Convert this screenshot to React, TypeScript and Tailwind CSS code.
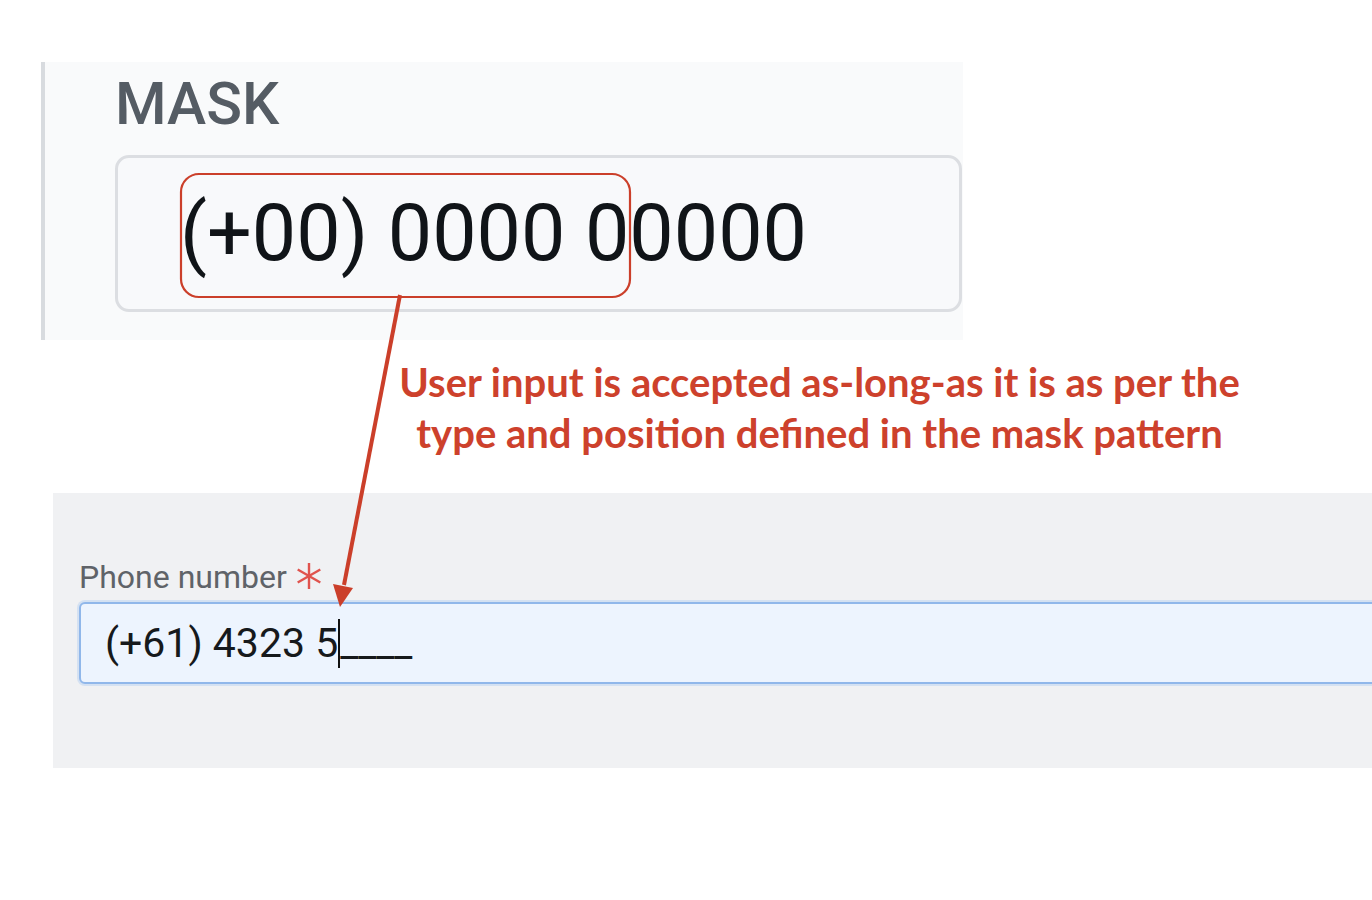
import React from 'react';

const Asterisk = () => (
  <svg width="28" height="28" viewBox="0 0 28 28" className="ml-[8px] -mt-[2px]">
    <g stroke="#e0534d" strokeWidth="2.4" strokeLinecap="butt">
      <line x1="14" y1="1" x2="14" y2="27" />
      <line x1="2.7" y1="7.5" x2="25.3" y2="20.5" />
      <line x1="2.7" y1="20.5" x2="25.3" y2="7.5" />
    </g>
  </svg>
);

const Annotation = () => (
  <svg
    width="1372"
    height="900"
    viewBox="0 0 1372 900"
    className="pointer-events-none absolute left-0 top-0"
  >
    {/* highlight round the mask prefix */}
    <rect x="181" y="174" width="449" height="123" rx="18" fill="none" stroke="#cb3f2a" strokeWidth="2.2" />
    {/* arrow down to the field */}
    <line x1="400" y1="295" x2="344" y2="585" stroke="#cb3f2a" strokeWidth="4" />
    <polygon points="333,584 353,588 340,607" fill="#cb3f2a" />
  </svg>
);

export default function App() {
  return (
    <div className="relative h-[900px] w-[1372px] overflow-hidden bg-white font-['Roboto',sans-serif]">
      {/* Mask definition panel */}
      <div className="ml-[41px] mt-[62px] w-[922px] border-l-4 border-[#d8dbdf] bg-[#f9fafb] pb-[28px] pl-[70px] pt-[12px]">
        <div className="text-[59px] font-medium leading-none text-[#555c64]">MASK</div>
        <div className="mt-[22px] flex h-[157px] w-[847px] items-center rounded-[14px] border-[3px] border-[#dcdee2] bg-[#f8f9fb] pl-[62px]">
          <span className="text-[79px] leading-none text-[#101418]">(+00) 0000 00000</span>
        </div>
      </div>

      {/* Explanation */}
      <div className="ml-[372px] mt-[17px] w-[895px] text-center font-['Lato',sans-serif] text-[40px] font-bold leading-[51px] text-[#cd412c]">
        <div>User input is accepted as-long-as it is as per the</div>
        <div>type and position defined in the mask pattern</div>
      </div>

      {/* Live field */}
      <div className="ml-[53px] mt-[34px] bg-[#f0f1f3] pb-[84px] pl-[26px] pt-[68px]">
        <div className="flex items-center text-[32px] leading-none text-[#5f6368]">
          <span>Phone number</span>
          <Asterisk />
        </div>
        <div className="-mr-[20px] mt-[9px] flex h-[82px] items-center rounded-[6px] border-2 border-[#90b7ea] bg-[#edf4fe] pl-[24px] shadow-[0_0_0_2px_rgba(160,195,240,0.35)]">
          <span className="text-[41px] leading-none text-[#16191c]">(+61) 4323 5</span>
          <span className="h-[49px] w-[2px] bg-[#111]" />
          <span className="text-[40px] leading-none text-[#16191c]">____</span>
        </div>
      </div>

      <Annotation />
    </div>
  );
}
